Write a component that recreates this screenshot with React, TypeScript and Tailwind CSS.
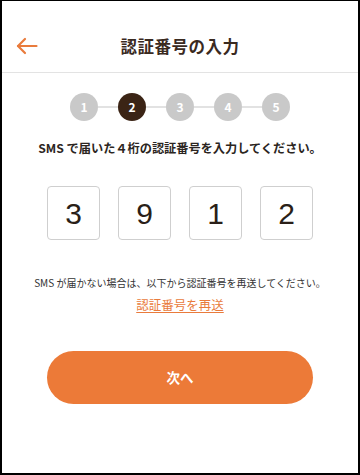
import React from "react";

const steps = [1, 2, 3, 4, 5];
const code = ["3", "9", "1", "2"];

function BackArrow() {
  return (
    <svg width="22" height="18" viewBox="0 0 22 18" fill="none" stroke="#e97b3c" strokeWidth="2.2" strokeLinecap="round" strokeLinejoin="round">
      <path d="M20.5 9H2" />
      <path d="M9 2L2 9l7 7" />
    </svg>
  );
}

function Stepper({ current }: { current: number }) {
  return (
    <div className="flex items-center justify-center">
      {steps.map((n, i) => (
        <React.Fragment key={n}>
          {i > 0 && <div className="w-5 h-[2px] bg-[#e2e2e2]"></div>}
          <div
            className={
              n === current
                ? "w-7 h-7 rounded-full bg-[#3b2415] text-white flex items-center justify-center text-[12px] font-bold"
                : "w-7 h-7 rounded-full bg-[#c9c9c9] text-white flex items-center justify-center text-[12px] font-bold"
            }
          >
            {n}
          </div>
        </React.Fragment>
      ))}
    </div>
  );
}

export default function App() {
  return (
    <div
      className="w-[360px] h-[475px] bg-white border-x-2 border-b-2 border-t border-black flex flex-col"
      style={{ fontFamily: '"Noto Sans CJK JP", "Noto Sans", sans-serif' }}
    >
      {/* ヘッダー */}
      <div className="relative h-[72px] pt-[20px] border-b border-[#e3e3e3] flex items-center justify-center shrink-0">
        <button className="absolute left-[14px] top-[36px]">
          <BackArrow />
        </button>
        <h1 className="text-[16.5px] font-bold text-[#3a2a1f] tracking-[0.5px]">認証番号の入力</h1>
      </div>

      <div className="flex flex-col items-center">
        <div className="mt-5">
          <Stepper current={2} />
        </div>

        <p className="mt-[18px] text-[12.2px] leading-[18px] font-bold text-[#2b2521]">
          SMS で届いた４桁の認証番号を入力してください。
        </p>

        {/* コード入力 */}
        <div className="mt-[29px] flex gap-[18px]">
          {code.map((d, i) => (
            <div
              key={i}
              className="w-[53px] h-[54px] border border-[#cfcfcf] rounded-[4px] flex items-center justify-center text-[30px] text-[#2a1f18]"
              style={{ fontFamily: '"Liberation Sans", Arial, sans-serif' }}
            >
              {d}
            </div>
          ))}
        </div>

        <p className="mt-[35px] text-[10px] leading-4 text-[#333]">
          SMS が届かない場合は、以下から認証番号を再送してください。
        </p>
        <a className="mt-1 text-[12.5px] leading-5 text-[#e97b3c] underline underline-offset-2">認証番号を再送</a>

        <button className="mt-[36px] w-[266px] h-[53px] rounded-full bg-[#ec7a38] text-white text-[13.5px] font-bold">
          次へ
        </button>
      </div>
    </div>
  );
}
